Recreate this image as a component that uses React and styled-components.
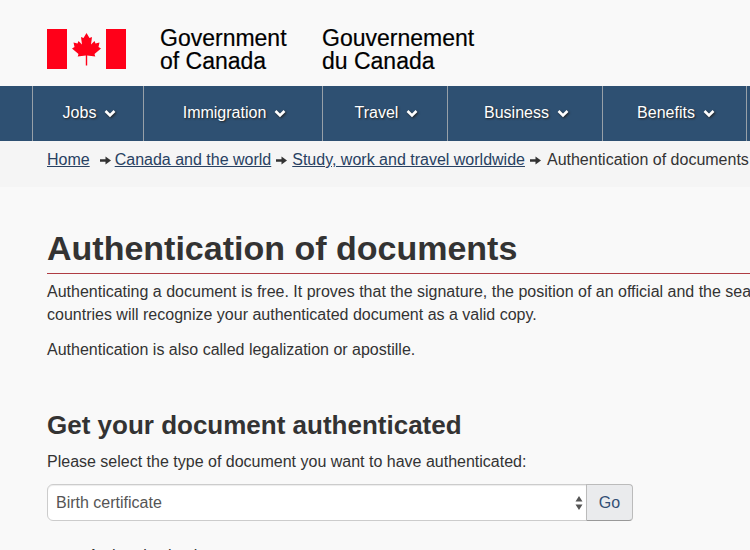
import React from "react";
import styled, { createGlobalStyle } from "styled-components";

const Global = createGlobalStyle`
  html, body { margin: 0; padding: 0; background: #f9f9f9; }
  body { width: 750px; height: 550px; overflow: hidden; font-family: "Liberation Sans", Arial, sans-serif; color: #333; }
`;
const Page = styled.div`width: 750px; height: 550px; overflow: hidden;`;
const Header = styled.header`
  height: 86px; display: flex; align-items: flex-start; padding: 29px 0 0 47px; box-sizing: border-box;
`;
const FlagSvg = styled.svg`width: 79px; height: 40px; flex: none; margin-right: 34px;`;
const Sig = styled.div`
  font-size: 23px; line-height: 23px; color: #000; width: 162px; margin-top: -2px; letter-spacing: 0;
  -webkit-text-stroke: .2px #000;
`;
const Nav = styled.nav`
  height: 55px; background: #2e5072; display: flex; padding-left: 32px; box-sizing: border-box;
`;
const NavItem = styled.div`
  width: ${p => p.$w}px; flex: none; box-sizing: border-box; border-left: 1px solid #97a0a8;
  display: flex; align-items: center; justify-content: center; gap: 8px;
  color: #fff; font-size: 16px; text-shadow: 1px 1px 2px #222;
  padding: 0 0 2px 3px;
`;
const Chev = styled.svg`width: 12px; height: 9px; margin-top: 2px; filter: drop-shadow(1px 1px 1px #222);`;
const Crumbs = styled.div`
  height: 46px; background: #f5f5f5; padding: 9px 0 0 47px; box-sizing: border-box; font-size: 16px; line-height: 20px;
  white-space: nowrap; overflow: hidden; display: flex; align-items: flex-start;
`;
const Crumb = styled.a`color: #284162; text-decoration: underline;`;
const Arrow = styled.svg`width: 11px; height: 9px; flex: none; margin: 6px ${p => p.$r}px 0 ${p => p.$l}px;`;
const Main = styled.main`padding-left: 47px; width: 900px;`;
const Title = styled.h1`
  margin: 42px 0 0; font-size: 34px; line-height: 38px; font-weight: 700; color: #333;
  padding-bottom: 6px; border-bottom: 1px solid #af3c43; width: 703px;
`;
const Para = styled.p`margin: 0 0 12px; font-size: 16px; line-height: 23px; color: #333; white-space: nowrap;`;
const Intro = styled(Para)`margin-top: 6px;`;
const H2 = styled.h2`margin: 49px 0 0; font-size: 26px; line-height: 30px; font-weight: 700; color: #333;`;
const Prompt = styled(Para)`margin: 10px 0 0;`;
const Form = styled.div`display: flex; margin-top: 11px;`;
const Select = styled.div`
  width: 540px; height: 37px; box-sizing: border-box; background: #fff; border: 1px solid #ccc; border-radius: 6px 0 0 6px;
  display: flex; align-items: center; justify-content: space-between; padding: 0 3px 0 8px;
  font-size: 16px; color: #555; box-shadow: inset 0 1px 1px rgba(0,0,0,.075);
`;
const Updown = styled.svg`width: 8px; height: 16px;`;
const Go = styled.button`
  width: 47px; height: 37px; box-sizing: border-box; margin-left: -1px; background: #eaebed; border: 1px solid #bbb; border-bottom-color: #999;
  border-radius: 0 4px 4px 0; color: #335075; font: 16px "Liberation Sans", Arial, sans-serif; padding: 0;
`;
const Below = styled.div`margin: 25px 0 0 41px; font-size: 16px; line-height: 20px; color: #333;`;

const Chevron = () => (
  <Chev viewBox="0 0 12 9"><path d="M1.500 2 L6 6.500 L10.500 2" fill="none" stroke="#fff" strokeWidth="2.600" /></Chev>
);
const CrumbArrow = ({ l, r }) => (
  <Arrow $l={l} $r={r} viewBox="0 0 11 9"><path d="M0 3.200H5.500V.5L11 4.500 5.500 8.500V5.800H0Z" fill="#333" /></Arrow>
);
const Item = ({ w, children }) => <NavItem $w={w}>{children}<Chevron /></NavItem>;

export default function App() {
  return (
    <Page>
      <Global />
      <Header>
        <FlagSvg viewBox="0 0 79 40">
          <rect x="0" y="0" width="20" height="40" fill="#ff0019" />
          <rect x="59" y="0" width="20" height="40" fill="#ff0019" />
          <path fill="#ff0019" d="M39.500 4L42.500 9 45 8 44 15.500 47.500 12 48.500 14.500 52.500 13.500 51.500 18 54 19.500 47.500 25 48.300 27.500 40.200 26.500 40.200 36.500 38.800 36.500 38.800 26.500 30.700 27.500 31.500 25 25 19.500 27.500 18 26.500 13.500 30.500 14.500 31.500 12 35 15.500 34 8 36.500 9Z" />
        </FlagSvg>
        <Sig>Government<br />of Canada</Sig>
        <Sig>Gouvernement<br />du Canada</Sig>
      </Header>
      <Nav>
        <Item w={111}>Jobs</Item>
        <Item w={179}>Immigration</Item>
        <Item w={125}>Travel</Item>
        <Item w={155}>Business</Item>
        <Item w={144}>Benefits</Item>
        <NavItem $w={20} />
      </Nav>
      <Crumbs>
        <Crumb>Home</Crumb>
        <CrumbArrow l={10} r={4} />
        <Crumb>Canada and the world</Crumb>
        <CrumbArrow l={5} r={5} />
        <Crumb>Study, work and travel worldwide</Crumb>
        <CrumbArrow l={5} r={6} />
        <span>Authentication of documents</span>
      </Crumbs>
      <Main>
        <Title>Authentication of documents</Title>
        <Intro>Authenticating a document is free. It proves that the signature, the position of an official and the seal or stamp on your document are genuine. Other<br />countries will recognize your authenticated document as a valid copy.</Intro>
        <Para>Authentication is also called legalization or apostille.</Para>
        <H2>Get your document authenticated</H2>
        <Prompt>Please select the type of document you want to have authenticated:</Prompt>
        <Form>
          <Select>
            Birth certificate
            <Updown viewBox="0 0 8 16"><path d="M4 1L7.500 6.500H.5ZM4 15L.5 9.500H7.500Z" fill="#555" /></Updown>
          </Select>
          <Go>Go</Go>
        </Form>
        <Below>Authentication by</Below>
      </Main>
    </Page>
  );
}
